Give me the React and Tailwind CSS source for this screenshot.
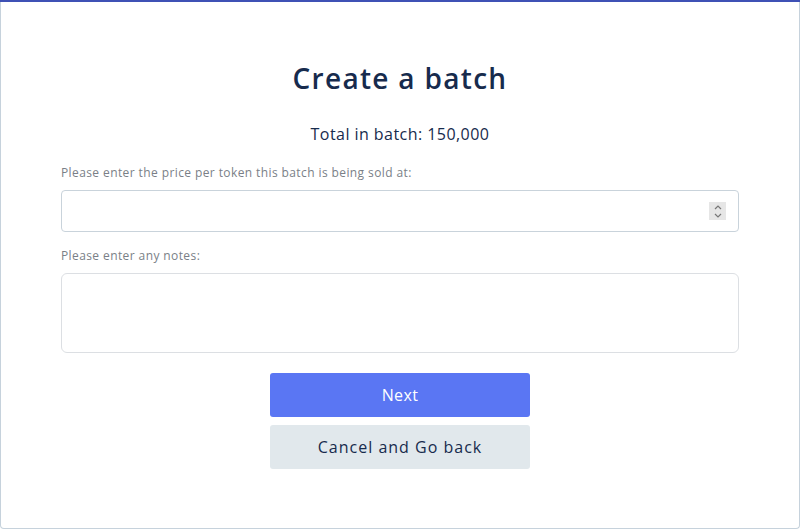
import React from 'react';

export default function App() {
    return (
        <div
            className="w-[800px] h-[529px] bg-white flex flex-col"
            style={{ fontFamily: '"Open Sans", "Liberation Sans", sans-serif' }}
        >
            <div className="h-[2px] bg-[#3f51b5]" />
            <div className="flex-1 border border-t-0 border-[#c6d2dc] rounded-b-[4px] flex flex-col items-center px-[60px]">
                <h1 className="mt-[58px] text-[28px] leading-[36px] font-semibold text-[#172b4d] tracking-[1.3px]">
                    Create a batch
                </h1>
                <p className="mt-[27px] text-[16px] leading-[22px] text-[#172b4d] tracking-[0.45px]">
                    Total in batch: 150,000
                </p>

                {/* price field */}
                <div className="w-full mt-[20px]">
                    <label className="block text-[12px] leading-[16px] text-[#7a7f87] tracking-[0.4px]">
                        Please enter the price per token this batch is being sold at:
                    </label>
                    <div className="mt-[9px] h-[42px] w-full border border-[#c9d3db] rounded-[4px] flex items-center justify-end pr-[12px]">
                        <div className="w-[17px] h-[18px] bg-[#e6e6e6] flex flex-col items-center justify-center gap-[3px]">
                            <svg width="8" height="5" viewBox="0 0 8 5" fill="none">
                                <path d="M1 4L4 1L7 4" stroke="#777" strokeWidth="1.2" />
                            </svg>
                            <svg width="8" height="5" viewBox="0 0 8 5" fill="none">
                                <path d="M1 1L4 4L7 1" stroke="#777" strokeWidth="1.2" />
                            </svg>
                        </div>
                    </div>
                </div>

                {/* notes field */}
                <div className="w-full mt-[16px]">
                    <label className="block text-[12px] leading-[16px] text-[#7a7f87] tracking-[0.4px]">
                        Please enter any notes:
                    </label>
                    <div className="mt-[9px] h-[80px] w-full border border-[#dcdfe3] rounded-[6px]" />
                </div>

                <button className="mt-[20px] w-[260px] h-[44px] rounded-[3px] bg-[#5a76f3] text-white text-[16px] tracking-[0.4px]">
                    Next
                </button>
                <button className="mt-[8px] w-[260px] h-[44px] rounded-[3px] bg-[#e1e8ec] text-[#172b4d] text-[16px] tracking-[1px]">
                    Cancel and Go back
                </button>
            </div>
        </div>
    );
}
